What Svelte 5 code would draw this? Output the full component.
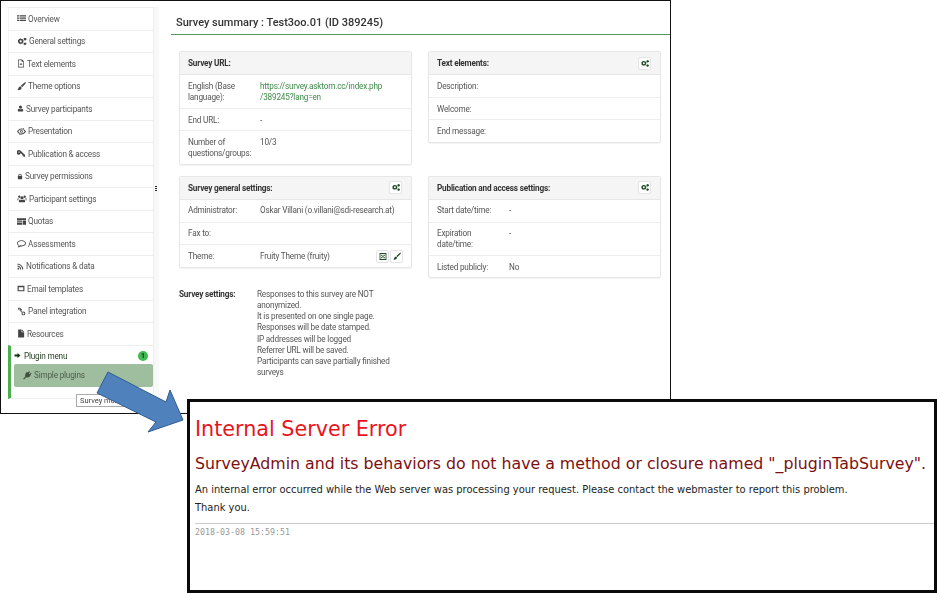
<script>
	const icons = {
		list: 'M0 2h3v2H0zM4 2h10v2H4zM0 5.500h3v2H0zM4 5.500h10v2H4zM0 9h3v2H0zM4 9h10v2H4z',
		cogs: 'M5 2l1 1.200 1.600-.3.600 1.500 1.300.8-.5 1.500.5 1.500-1.300.8-.6 1.500L6 10.200 5 11.500 4 10.200l-1.600.3-.6-1.500L.5 8.200 1 6.700.5 5.200l1.300-.8.600-1.500L4 3.200zM5 5a1.700 1.700 0 100 3.400A1.700 1.700 0 005 5zM11.500 1l1.500.8 1 .2-.3 1.500.3 1-1.500.5-1 .8-1-1-1-.5.300-1.500-.3-1 1.500-.3zM11.500 8.500l1.500.5 1 .5-.5 1.300.2 1-1.400.3-.8.900-1-.9-1.200-.3.400-1.200-.4-1 1.300-.4z',
		file: 'M2 0h7l3 3v11H2zM3.200 1.200v11.600h7.600V4H8V1.200zM5 6h4v1.200H5zM5 8.500h4v1.200H5z',
		brush: 'M13.500.5c.5.400.4 1-.2 1.700L8 8 6 6l5.800-5.300c.7-.5 1.300-.6 1.700-.2zM5.200 6.800l2 2C7 11 5 13 .5 12.500c1.500-1 1.200-2.200 2-3.700.5-1 1.500-1.800 2.700-2z',
		user: 'M7 1a3 3 0 013 3.200C10 6 9 7.500 7 7.500S4 6 4 4.200A3 3 0 017 1zM4 7.500c.8.800 1.800 1.200 3 1.200s2.200-.4 3-1.200c1.500.2 2.500 1.200 2.500 3.500 0 1-.6 2-1.700 2H3.200c-1.100 0-1.700-1-1.700-2 0-2.300 1-3.300 2.500-3.500z',
		eye: 'M0 7c2-3 4.300-4.500 7-4.500S12 4 14 7c-2 3-4.300 4.500-7 4.500S2 10 0 7zm2 0c1.400 2 3 3 5 3s3.600-1 5-3c-1.400-2-3-3-5-3S3.400 5 2 7zM7 4.800a2.200 2.200 0 110 4.400 2.200 2.200 0 010-4.400zM10 1.500l1 .7-6.500 10.300-1-.7z',
		key: 'M4 2a3.500 3.500 0 013.300 2.400L12.500 9.500V12H10V10.500H8.500V9L6 6.700A3.500 3.500 0 114 2zM3.200 3.700a1.100 1.100 0 100 2.200 1.100 1.100 0 000-2.200z',
		lock: 'M3 6V4.500a4 4 0 018 0V6h1v7.500H2V6zm2 0h4V4.500a2 2 0 00-4 0z',
		users: 'M7 3.500a2.500 2.500 0 010 5 2.500 2.500 0 010-5zM2.800 2.500a1.800 1.800 0 010 3.600 1.800 1.800 0 010-3.600zM11.200 2.500a1.800 1.800 0 010 3.600 1.800 1.800 0 010-3.600zM4 8.500c.8.600 1.800 1 3 1s2.200-.4 3-1c1.200.2 1.800 1.200 1.800 3 0 .8-.5 1.500-1.300 1.500h-7c-.8 0-1.300-.7-1.300-1.500 0-1.800.6-2.800 1.800-3zM.5 6.500c.6.300 1.200.5 1.800.6-.7.500-1.200 1.500-1.300 2.900H.5C0 10 0 9.500 0 8.800c0-1 .1-1.800.5-2.300zM13.500 6.500c.4.500.5 1.300.5 2.300 0 .7 0 1.200-.5 1.200H13c-.1-1.400-.6-2.400-1.300-2.900.6-.1 1.200-.3 1.800-.6z',
		quota: 'M0 2h14v2.500H0zM0 5.500h8v2H0zM9 5.500h5v6.500H9zM0 8.500h8V12H0z',
		comment: 'M7 2c3.800 0 7 2.100 7 4.800s-3.200 4.800-7 4.800c-.6 0-1.200 0-1.700-.1C4 12.600 2.500 13 1 13c.8-.8 1.400-1.700 1.500-2.700C1 9.400 0 8.200 0 6.800 0 4.100 3.200 2 7 2zm0 1.200c-3.200 0-5.800 1.600-5.800 3.600 0 1.100.9 2.100 2.400 2.800-.1.500-.2.900-.4 1.300.7-.2 1.400-.6 2-1.100.6.100 1.200.2 1.800.2 3.200 0 5.800-1.600 5.800-3.200S10.200 3.200 7 3.200z',
		rss: 'M1 1.500c6.500 0 11.500 5 11.500 11.500h-2C10.500 7.600 6.400 3.500 1 3.500zM1 5.500c4.200 0 7.500 3.300 7.500 7.500h-2C6.500 9.900 4.100 7.500 1 7.500zM2.700 9.600a1.700 1.700 0 110 3.400 1.700 1.700 0 010-3.400z',
		mail: 'M1 2h12v10H1zM3 5v5h8V5z',
		link: 'M3.500 1a3 3 0 012.700 1.700L8 4.500 6.500 6 5 4.500a3 3 0 01-1.500.4 2 2 0 110-4zM3.500 2.300a1 1 0 100 2 1 1 0 000-2zM10 7a3 3 0 110 6 3 3 0 010-6zM10 8.500a1.500 1.500 0 100 3 1.500 1.500 0 000-3zM5.500 5l3 3-1 1-3-3z',
		doc: 'M2 0h6v5h4.500v9H2zM9 0l3.500 4H9z',
		arrow: 'M7 2l6 5-6 5V9H1V5h6z',
		plug: 'M10 .5l1.200 1.200L9 4l1 1 2.300-2.300 1.200 1.200L11 6.500l1 1-.8.8C9.500 10 7 10.500 5 9.800L2 13H.5v-1.500l3.200-3C3 6.500 3.500 4 5.200 2.300L6 1.500l1 1z',
		image: 'M1 1h12v12H1zM2.500 2.500v9h9v-9zM4 4h2v2H4zM8 4h2v2H8zM4 8h2v2H4zM8 8h2v2H8zM6 6h2v2H6z'
	};

	const menu = [
		{ icon: 'list', width: 9, label: 'Overview' },
		{ icon: 'cogs', width: 10, label: 'General settings' },
		{ icon: 'file', width: 8, label: 'Text elements' },
		{ icon: 'brush', width: 9, label: 'Theme options' },
		{ icon: 'user', width: 7, label: 'Survey participants' },
		{ icon: 'eye', width: 9, label: 'Presentation' },
		{ icon: 'key', width: 9, label: 'Publication & access' },
		{ icon: 'lock', width: 6, label: 'Survey permissions' },
		{ icon: 'users', width: 10, label: 'Participant settings' },
		{ icon: 'quota', width: 9, label: 'Quotas' },
		{ icon: 'comment', width: 9, label: 'Assessments' },
		{ icon: 'rss', width: 7, label: 'Notifications & data' },
		{ icon: 'mail', width: 8, label: 'Email templates' },
		{ icon: 'link', width: 9, label: 'Panel integration' },
		{ icon: 'doc', width: 8, label: 'Resources' }
	];

	const settings = [
		'Responses to this survey are NOT anonymized.',
		'It is presented on one single page.',
		'Responses will be date stamped.',
		'IP addresses will be logged',
		'Referrer URL will be saved.',
		'Participants can save partially finished surveys'
	];
</script>

{#snippet icon(name, width = 9)}
	<svg class="icon" viewBox="0 0 14 14" {width} height="9" preserveAspectRatio="xMidYMid meet"><path d={icons[name]} fill-rule="evenodd" /></svg>
{/snippet}

{#snippet editBtn(name = 'cogs')}
	<span class="edit-btn">{@render icon(name, 8)}</span>
{/snippet}

<div class="canvas">
	<section class="window admin">
		<nav class="sidebar">
			{#each menu as item}
				<div class="item">{@render icon(item.icon, item.width)}<span>{item.label}</span></div>
			{/each}
			<div class="plugin-group">
				<div class="plugin-head">
					{@render icon('arrow', 7)}<span>Plugin menu</span>
					<b class="count">1</b>
				</div>
				<div class="plugin-item">{@render icon('plug', 9)}<span>Simple plugins</span></div>
			</div>
		</nav>
		<div class="gutter"><i></i></div>

		<main class="summary">
			<h1>Survey summary : Test3oo.01 (ID 389245)</h1>
			<div class="panels">
				<div class="col">
					<div class="panel">
						<header>Survey URL:</header>
						<div class="row tall"><span class="key">English (Base language):</span><a class="val" href="#top">https://survey.asktom.cc/index.php<br />/389245?lang=en</a></div>
						<div class="row"><span class="key">End URL:</span><span class="val">-</span></div>
						<div class="row tall"><span class="key">Number of questions/groups:</span><span class="val">10/3</span></div>
					</div>
					<div class="panel">
						<header>Survey general settings:{@render editBtn()}</header>
						<div class="row"><span class="key">Administrator:</span><span class="val">Oskar Villani (o.villani@sdi-research.at)</span></div>
						<div class="row"><span class="key">Fax to:</span></div>
						<div class="row">
							<span class="key">Theme:</span><span class="val">Fruity Theme (fruity)</span>
							<span class="btns">{@render editBtn('image')}{@render editBtn('brush')}</span>
						</div>
					</div>
					<div class="settings">
						<strong>Survey settings:</strong>
						<div>
							{#each settings as line}
								<div>{line}</div>
							{/each}
						</div>
					</div>
				</div>
				<div class="col">
					<div class="panel text-panel">
						<header>Text elements:{@render editBtn()}</header>
						<div class="row"><span class="key">Description:</span></div>
						<div class="row"><span class="key">Welcome:</span></div>
						<div class="row"><span class="key">End message:</span></div>
					</div>
					<div class="panel">
						<header>Publication and access settings:{@render editBtn()}</header>
						<div class="row"><span class="key">Start date/time:</span><span class="val">-</span></div>
						<div class="row tall"><span class="key">Expiration date/time:</span><span class="val">-</span></div>
						<div class="row"><span class="key">Listed publicly:</span><span class="val">No</span></div>
					</div>
				</div>
			</div>
		</main>
		<div class="tooltip">Survey menu</div>
	</section>

	<svg class="callout" viewBox="0 0 100 70" width="100" height="70">
		<polygon points="12,2 70,32 74,20 87,50 52,62 60,52 1,23" />
	</svg>

	<section class="window error">
		<h2>Internal Server Error</h2>
		<h3>SurveyAdmin and its behaviors do not have a method or closure named "_pluginTabSurvey".</h3>
		<p>An internal error occurred while the Web server was processing your request. Please contact the webmaster to report this problem.</p>
		<p class="thanks">Thank you.</p>
		<hr />
		<div class="stamp">2018-03-08 15:59:51</div>
	</section>
</div>

<style>
	:global(body) {
		background: #fff;
	}

	.canvas {
		position: relative;
		width: 937px;
		height: 593px;
		overflow: hidden;
		background: #fff;
		font-family: Roboto, 'Liberation Sans', sans-serif;
		font-size: 8.2px;
		letter-spacing: -0.19px;
		color: #555;
	}

	.window {
		position: absolute;
		box-sizing: border-box;
		background: #fff;
	}

	.admin {
		left: 0;
		top: 0;
		width: 671px;
		height: 414px;
		border: 1px solid #111;
		display: flex;
		padding: 6px 0 0 7px;
		filter: blur(0.35px);
	}

	.sidebar {
		width: 146px;
		flex: none;
	}

	.item {
		box-sizing: border-box;
		height: 22.5px;
		display: flex;
		align-items: center;
		gap: 2px;
		padding-left: 8px;
		border: 1px solid #eee;
		border-bottom: none;
		border-left-color: #f4f4f4;
	}

	.icon {
		flex: none;
		fill: #444;
	}

	.plugin-group {
		height: 54px;
		box-sizing: border-box;
		border-left: 3px solid #4cae4c;
		border-top: 1px solid #eee;
		border-bottom: 1px solid #eee;
		border-right: 1px solid #eee;
	}

	.plugin-head {
		height: 18px;
		box-sizing: border-box;
		padding: 2px 5px 0 3px;
		display: flex;
		align-items: center;
		gap: 3px;
		color: #1f3d1f;
	}

	.plugin-head .icon {
		fill: #143214;
	}

	.count {
		margin-left: auto;
		width: 10px;
		height: 10px;
		border-radius: 50%;
		background: #3fb950;
		color: #143214;
		font-size: 7px;
		line-height: 10px;
		text-align: center;
	}

	.plugin-item {
		height: 23px;
		display: flex;
		align-items: center;
		gap: 2px;
		padding-left: 9px;
		margin-left: 3px;
		background: #9fbd9f;
		border-radius: 2px;
		color: #4d5f4d;
	}

	.plugin-item .icon {
		fill: #3e4f3e;
	}

	.gutter {
		width: 5px;
		flex: none;
		background: #f8f8f8;
		position: relative;
	}

	.gutter i {
		position: absolute;
		left: 1px;
		top: 179px;
		width: 2px;
		height: 6px;
		background: repeating-linear-gradient(#222 0 1px, transparent 1px 2px);
	}

	.summary {
		flex: 1;
		padding-left: 12px;
		min-width: 0;
	}

	h1 {
		margin: 0 0 16px;
		height: 28px;
		box-sizing: border-box;
		padding: 8px 0 0 5px;
		border-bottom: 1px solid #4f9a5c;
		font-size: 11px;
		font-weight: 500;
		letter-spacing: 0;
		line-height: 15px;
		color: #333;
	}

	.panels {
		display: flex;
		gap: 16px;
		padding-left: 8px;
	}

	.col {
		width: 233px;
		display: flex;
		flex-direction: column;
		gap: 11px;
	}

	.panel {
		border: 1px solid #e6e6e6;
		border-radius: 2px;
		box-shadow: 0 1px 1px rgba(0, 0, 0, 0.05);
	}

	.panel header {
		height: 23px;
		box-sizing: border-box;
		display: flex;
		align-items: center;
		justify-content: space-between;
		padding: 0 9px 0 8px;
		background: #f5f5f5;
		border-bottom: 1px solid #e6e6e6;
		font-weight: 700;
		color: #333;
	}

	.edit-btn {
		box-sizing: border-box;
		width: 13px;
		height: 13px;
		display: inline-flex;
		align-items: center;
		justify-content: center;
		background: #fff;
		border: 1px solid #e4e4e4;
		border-radius: 2px;
	}

	.edit-btn .icon {
		fill: #1c4a24;
	}

	.row {
		min-height: 22px;
		box-sizing: border-box;
		padding: 5.5px 8px 4.5px;
		display: flex;
		line-height: 11.3px;
	}

	.row + .row {
		border-top: 1px solid #eee;
	}

	.row.tall {
		min-height: 33px;
	}

	.key {
		box-sizing: border-box;
		width: 72px;
		padding-right: 4px;
		flex: none;
	}

	.val {
		min-width: 0;
	}

	a.val {
		color: #3f8a4a;
		text-decoration: none;
	}

	.btns {
		margin-left: auto;
		display: flex;
		gap: 1px;
		margin-top: -1px;
	}

	.text-panel {
		margin-bottom: 22px;
	}

	.settings {
		display: flex;
		margin-top: 10px;
		line-height: 11.1px;
		gap: 21px;
	}

	.settings strong {
		width: 57px;
		flex: none;
		color: #333;
		white-space: nowrap;
	}

	.settings > div {
		width: 144px;
	}

	.tooltip {
		position: absolute;
		left: 75px;
		top: 393px;
		height: 11px;
		padding: 0 3px;
		background: #fff;
		border: 1px solid #aaa;
		font-size: 7.5px;
		letter-spacing: 0;
		line-height: 11px;
		color: #444;
		white-space: nowrap;
	}

	.callout {
		position: absolute;
		left: 96px;
		top: 370px;
		z-index: 2;
	}

	.callout polygon {
		fill: #4f81bd;
		stroke: #2f5c92;
		stroke-width: 1;
	}

	.error {
		left: 187px;
		top: 399px;
		width: 750px;
		height: 194px;
		border: 3px solid #0a0a0a;
		padding: 14.5px 5px 0;
		font-family: 'DejaVu Sans', Verdana, sans-serif;
		letter-spacing: 0;
		color: #222;
	}

	.error h2 {
		margin: 0;
		font-size: 20.7px;
		font-weight: 400;
		line-height: 24px;
		color: #e8141c;
	}

	.error h3 {
		margin: 14.5px 0 0;
		font-size: 15.77px;
		font-weight: 400;
		line-height: 18px;
		color: #7c1010;
		white-space: nowrap;
	}

	.error p {
		margin: 9.5px 0 0;
		font-size: 9.92px;
		line-height: 13px;
		white-space: nowrap;
	}

	.error p.thanks {
		margin-top: 5.5px;
	}

	.error hr {
		margin: 9px -5px 0 0;
		height: 1px;
		border: none;
		background: #ccc;
	}

	.stamp {
		margin-top: 3px;
		font-family: 'DejaVu Sans Mono', 'Liberation Mono', monospace;
		font-size: 8.3px;
		line-height: 11px;
		color: #999;
	}
</style>
